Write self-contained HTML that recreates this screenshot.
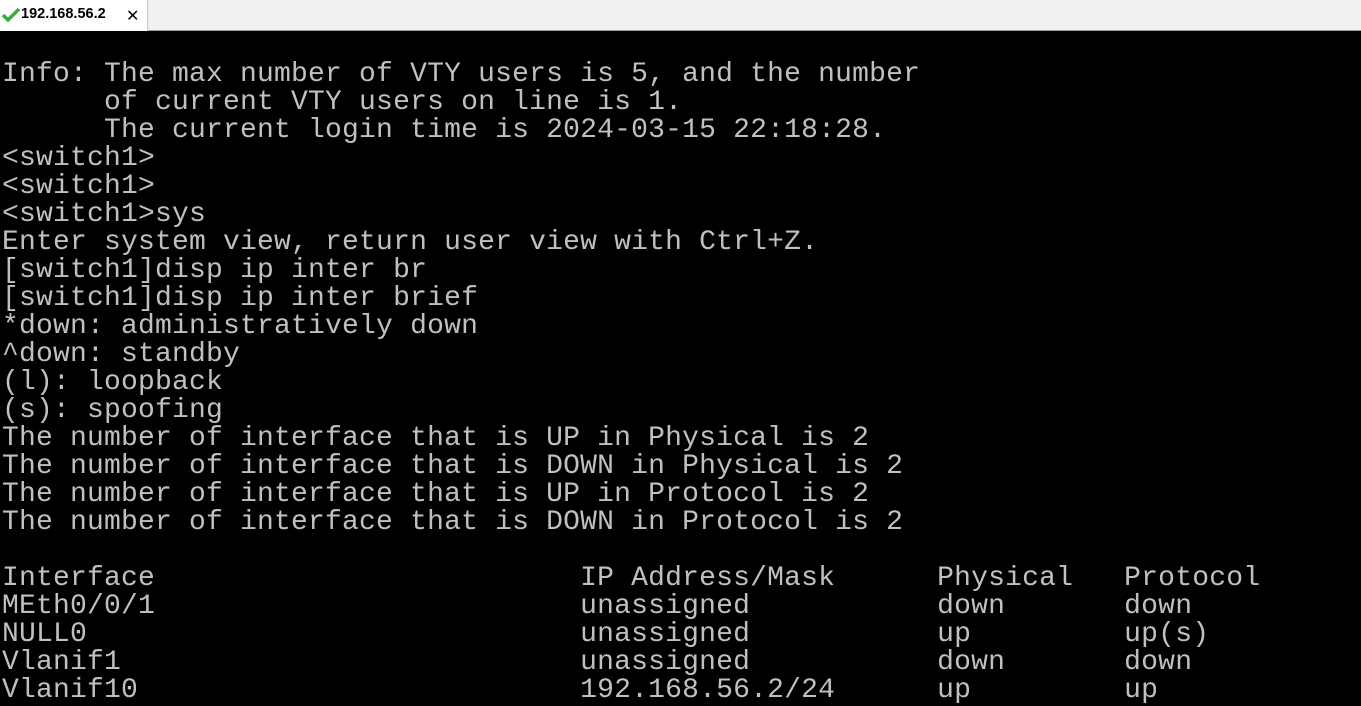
<!DOCTYPE html>
<html><head><meta charset="utf-8"><style>
html,body{margin:0;padding:0;width:1361px;height:699px;overflow:hidden;background:#000;}
#bar{position:absolute;left:0;top:0;width:1361px;height:30px;background:#f0f0f0;border-bottom:1px solid #a0a0a0;}
#tab{position:absolute;left:0;top:0;width:147px;height:31px;background:#fff;border-right:1px solid #c8c8c8;font-family:"Liberation Sans",sans-serif;font-weight:bold;font-size:14.5px;color:#000;}
#tab .t{position:absolute;left:21px;top:6px;}
#tab .x{position:absolute;left:126px;top:6px;font-weight:normal;font-size:16px;}
#term{position:absolute;left:2px;top:61px;margin:0;font-family:"Liberation Mono",monospace;font-size:28px;line-height:28px;letter-spacing:0.2px;color:#c0c0c0;white-space:pre;}
</style></head><body>
<div id="bar"></div>
<div id="tab"><svg style="position:absolute;left:2px;top:8px" width="18" height="14" viewBox="0 0 18 14"><path d="M1 7 L6 12 L17 1" stroke="#3cae3c" stroke-width="3.5" fill="none"/></svg><span class="t">192.168.56.2</span><span class="x">✕</span></div>
<pre id="term">Info: The max number of VTY users is 5, and the number
      of current VTY users on line is 1.
      The current login time is 2024-03-15 22:18:28.
&lt;switch1&gt;
&lt;switch1&gt;
&lt;switch1&gt;sys
Enter system view, return user view with Ctrl+Z.
[switch1]disp ip inter br
[switch1]disp ip inter brief
*down: administratively down
^down: standby
(l): loopback
(s): spoofing
The number of interface that is UP in Physical is 2
The number of interface that is DOWN in Physical is 2
The number of interface that is UP in Protocol is 2
The number of interface that is DOWN in Protocol is 2

Interface                         IP Address/Mask      Physical   Protocol
MEth0/0/1                         unassigned           down       down
NULL0                             unassigned           up         up(s)
Vlanif1                           unassigned           down       down
Vlanif10                          192.168.56.2/24      up         up</pre>
</body></html>
